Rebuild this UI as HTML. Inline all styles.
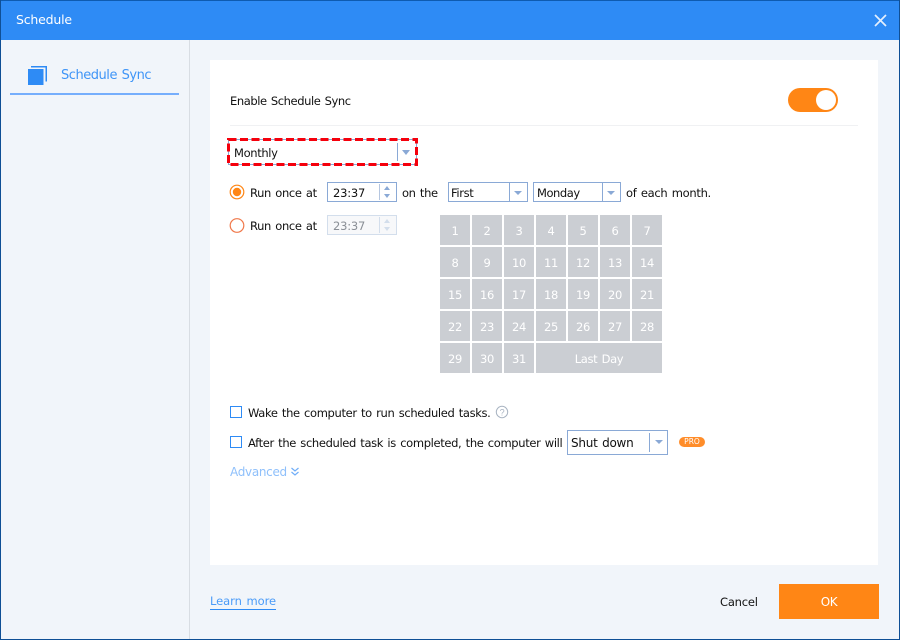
<!DOCTYPE html>
<html><head><meta charset="utf-8"><style>
html,body{margin:0;padding:0;width:900px;height:640px;overflow:hidden;background:#f1f5fa}
body{position:relative;font-family:"DejaVu Sans","Liberation Sans",sans-serif;font-size:11.5px;color:#111;letter-spacing:-.35px;word-spacing:1px}
.a{position:absolute}
.t{position:absolute;white-space:nowrap;line-height:16px;margin-top:1px}
.box{position:absolute;box-sizing:border-box;border:1px solid #8aa9d6;background:#fff}
.div{position:absolute;width:1px;background:#8aa9d6}
.arr{position:absolute;width:0;height:0;border-left:4.5px solid transparent;border-right:4.5px solid transparent;border-top:5px solid #8aa9d6}
.c{position:absolute;background:#cbced3;color:#fff;text-align:center;line-height:32px;height:30px;width:30px;font-size:11.5px}
.up{position:absolute;width:0;height:0;border-left:3.5px solid transparent;border-right:3.5px solid transparent;border-bottom:4px solid #8aa9d6}
.dn{position:absolute;width:0;height:0;border-left:3.5px solid transparent;border-right:3.5px solid transparent;border-top:4px solid #8aa9d6}
.cb{position:absolute;box-sizing:border-box;width:12px;height:12px;border:1px solid #2e8bf5;background:#fff}
</style></head><body>
<div class="a" style="left:0;top:0;width:900px;height:40px;background:#2e8bf5"></div>
<div class="a" style="left:0;top:0;width:900px;height:1px;background:#0e5bb0"></div>
<div class="a" style="left:0;top:0;width:1px;height:640px;background:#0f4f95"></div>
<div class="a" style="left:899px;top:0;width:1px;height:640px;background:#0f4f95"></div>
<div class="a" style="left:0;top:639px;width:900px;height:1px;background:#0f4f95"></div>
<div class="t" style="left:16px;top:11px;color:#fff;font-size:12.5px;letter-spacing:-.2px">Schedule</div>
<svg class="a" style="left:874px;top:14px" width="14" height="14" viewBox="0 0 14 14"><path d="M1 1L12 12M12 1L1 12" stroke="#e4effd" stroke-width="1.7" fill="none"/></svg>

<div class="a" style="left:189px;top:40px;width:1px;height:599px;background:#d8dde3"></div>
<svg class="a" style="left:28px;top:66px" width="20" height="20" viewBox="0 0 20 20"><rect x="0" y="3" width="15.5" height="16" fill="#2e8bf5"/><path d="M3 .75H18.25V15.5" stroke="#2e8bf5" stroke-width="1.5" fill="none"/></svg>
<div class="t" style="left:61px;top:67px;color:#3f95f7;font-size:13px;letter-spacing:-.47px">Schedule Sync</div>
<div class="a" style="left:10px;top:93px;width:169px;height:2px;background:#76aefc"></div>

<div class="a" style="left:210px;top:60px;width:668px;height:505px;background:#fff"></div>
<div class="t" style="left:230px;top:92px;letter-spacing:-.42px">Enable Schedule Sync</div>
<div class="a" style="left:788px;top:88px;width:50px;height:24px;border-radius:12px;background:#ff8615"></div>
<div class="a" style="left:816px;top:90px;width:20px;height:20px;border-radius:50%;background:#fff"></div>
<div class="a" style="left:230px;top:125px;width:628px;height:1px;background:#f0f1f3"></div>

<svg class="a" style="left:227px;top:138px" width="191" height="28"><rect x="1.5" y="1.5" width="188" height="25" fill="#fff" stroke="#8aa9d6" stroke-width="1"/><rect x="1.5" y="1.5" width="188" height="25" fill="none" stroke="#f5000c" stroke-width="3" stroke-dasharray="8 3.5"/></svg>
<div class="t" style="left:234px;top:144px">Monthly</div>
<div class="div" style="left:397px;top:143px;height:18px"></div>
<div class="arr" style="left:402px;top:150px"></div>

<svg class="a" style="left:229px;top:184px" width="16" height="50"><circle cx="8" cy="8" r="6.8" fill="#fff" stroke="#ff8615" stroke-width="1.2"/><circle cx="8" cy="8" r="4.2" fill="#ff8615"/><circle cx="8" cy="41.5" r="6.8" fill="#fff" stroke="#f0784a" stroke-width="1.2"/></svg>
<div class="t" style="left:250px;top:184px">Run once at</div>
<div class="box" style="left:327px;top:182px;width:70px;height:20px"></div>
<div class="t" style="left:333px;top:184px;letter-spacing:-.2px">23:37</div>
<div class="div" style="left:379px;top:184px;height:16px;background:#b5c6e0"></div>
<div class="up" style="left:384px;top:186px"></div><div class="dn" style="left:384px;top:194px"></div>
<div class="t" style="left:402px;top:184px">on the</div>
<div class="box" style="left:448px;top:182px;width:80px;height:20px"></div>
<div class="t" style="left:451px;top:184px">First</div>
<div class="div" style="left:509px;top:183px;height:18px"></div>
<div class="arr" style="left:514px;top:191px;border-left-width:4px;border-right-width:4px;border-top-width:4px"></div>
<div class="box" style="left:533px;top:182px;width:88px;height:20px"></div>
<div class="t" style="left:537px;top:184px;letter-spacing:-.45px">Monday</div>
<div class="div" style="left:602px;top:183px;height:18px"></div>
<div class="arr" style="left:607px;top:191px;border-left-width:4px;border-right-width:4px;border-top-width:4px"></div>
<div class="t" style="left:626px;top:184px;letter-spacing:-.3px">of each month.</div>

<div class="t" style="left:250px;top:217px">Run once at</div>
<div class="box" style="left:327px;top:215px;width:70px;height:20px;border-color:#d3deec;background:#f7f8fa"></div>
<div class="t" style="left:333px;top:217px;color:#8a8f96;letter-spacing:-.2px">23:37</div>
<div class="div" style="left:379px;top:217px;height:16px;background:#d3deec"></div>
<div class="up" style="left:384px;top:219px;border-bottom-color:#d3deec"></div><div class="dn" style="left:384px;top:227px;border-top-color:#d3deec"></div>

<div class="c" style="left:440px;top:215px">1</div><div class="c" style="left:472px;top:215px">2</div><div class="c" style="left:504px;top:215px">3</div><div class="c" style="left:536px;top:215px">4</div><div class="c" style="left:568px;top:215px">5</div><div class="c" style="left:600px;top:215px">6</div><div class="c" style="left:632px;top:215px">7</div>
<div class="c" style="left:440px;top:247px">8</div><div class="c" style="left:472px;top:247px">9</div><div class="c" style="left:504px;top:247px">10</div><div class="c" style="left:536px;top:247px">11</div><div class="c" style="left:568px;top:247px">12</div><div class="c" style="left:600px;top:247px">13</div><div class="c" style="left:632px;top:247px">14</div>
<div class="c" style="left:440px;top:279px">15</div><div class="c" style="left:472px;top:279px">16</div><div class="c" style="left:504px;top:279px">17</div><div class="c" style="left:536px;top:279px">18</div><div class="c" style="left:568px;top:279px">19</div><div class="c" style="left:600px;top:279px">20</div><div class="c" style="left:632px;top:279px">21</div>
<div class="c" style="left:440px;top:311px">22</div><div class="c" style="left:472px;top:311px">23</div><div class="c" style="left:504px;top:311px">24</div><div class="c" style="left:536px;top:311px">25</div><div class="c" style="left:568px;top:311px">26</div><div class="c" style="left:600px;top:311px">27</div><div class="c" style="left:632px;top:311px">28</div>
<div class="c" style="left:440px;top:343px">29</div><div class="c" style="left:472px;top:343px">30</div><div class="c" style="left:504px;top:343px">31</div><div class="c" style="left:536px;top:343px;width:126px">Last Day</div>

<div class="cb" style="left:230px;top:406px"></div>
<div class="t" style="left:248px;top:404px">Wake the computer to run scheduled tasks.</div>
<svg class="a" style="left:495px;top:405px" width="14" height="14"><circle cx="7" cy="7" r="5.7" fill="none" stroke="#a9b4c2" stroke-width="1"/><text x="7" y="10.5" font-size="9" font-family="Liberation Sans" text-anchor="middle" fill="#a9b4c2">?</text></svg>

<div class="cb" style="left:230px;top:436px"></div>
<div class="t" style="left:248px;top:434px">After the scheduled task is completed, the computer will</div>
<div class="box" style="left:567px;top:430px;width:101px;height:25px"></div>
<div class="t" style="left:571px;top:434px;font-size:12px;letter-spacing:-.25px">Shut down</div>
<div class="div" style="left:649px;top:433px;height:19px"></div>
<div class="arr" style="left:655px;top:440px;border-top-width:4px"></div>
<div class="a" style="left:679px;top:437px;width:26px;height:10px;border-radius:5px;background:#ff8d2a;color:#fff;font-size:7.5px;line-height:10px;text-align:center;letter-spacing:0">PRO</div>

<div class="t" style="left:230px;top:463px;color:#8fc0fb;font-size:12px;letter-spacing:-.3px">Advanced</div>
<svg class="a" style="left:290px;top:467px" width="10" height="10"><path d="M1.5 1L5 4L8.5 1M1.5 5L5 8L8.5 5" fill="none" stroke="#6fadf8" stroke-width="1.2"/></svg>

<div class="t" style="left:210px;top:593px;color:#4a9bf8;border-bottom:1px solid #2e8bf5;line-height:15px;letter-spacing:-.05px">Learn more</div>
<div class="t" style="left:720px;top:593px;letter-spacing:-.2px">Cancel</div>
<div class="a" style="left:779px;top:584px;width:100px;height:35px;background:#ff8615;color:#fff;text-align:center;line-height:36px;font-size:12px">OK</div>
</body></html>
